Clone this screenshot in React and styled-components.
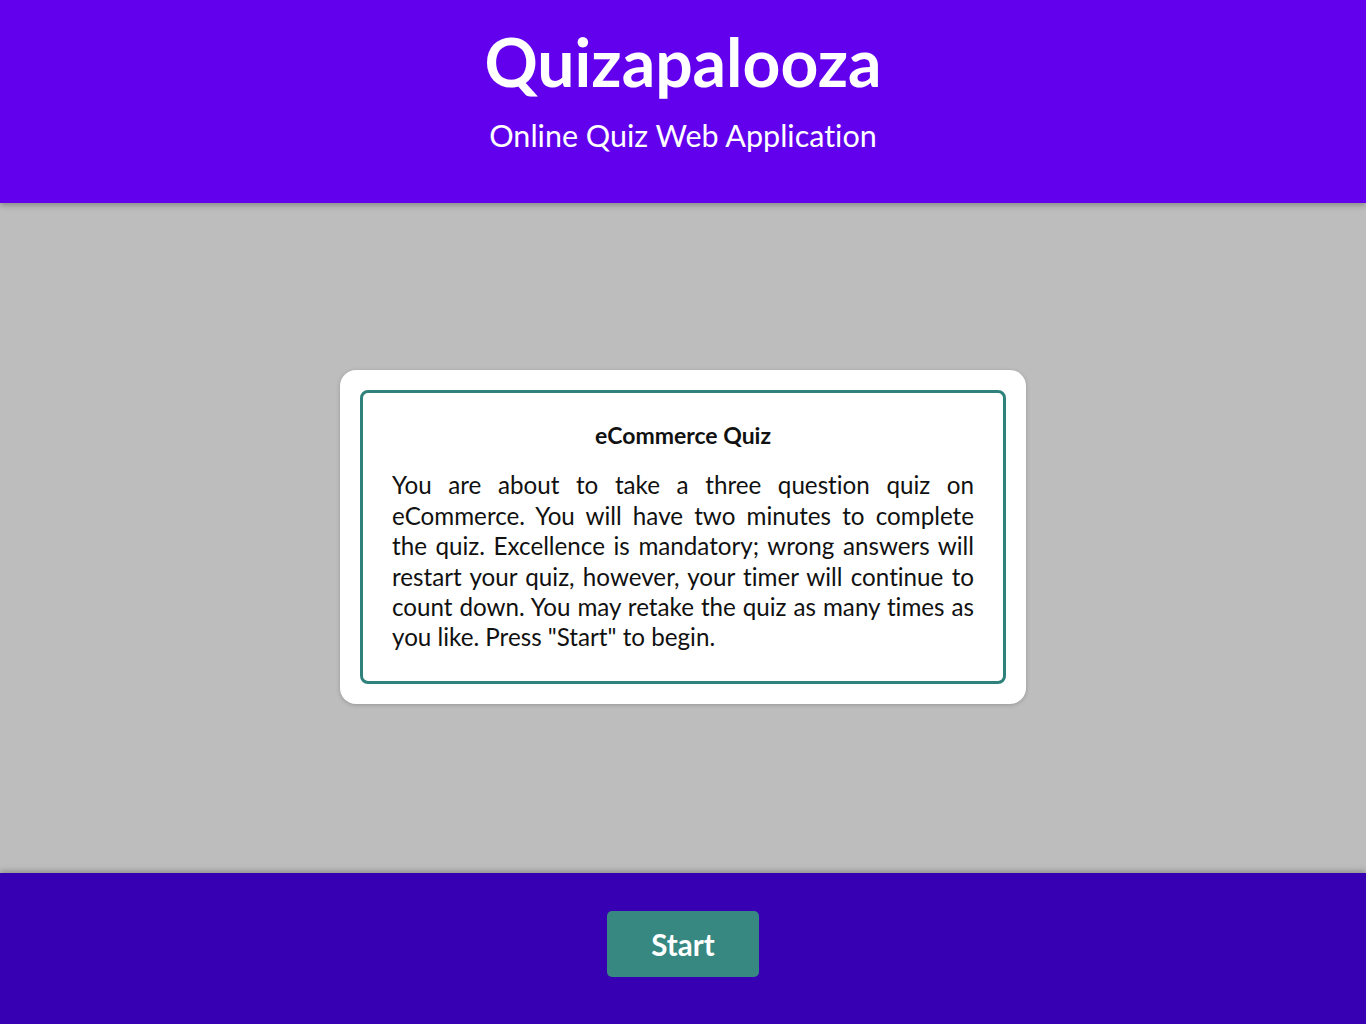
import React from 'react';
import styled, { createGlobalStyle } from 'styled-components';

const GlobalStyle = createGlobalStyle`
  html, body {
    margin: 0;
    padding: 0;
    height: 100%;
  }
  body {
    font-family: Lato, "Open Sans", sans-serif;
    font-variant-ligatures: none;
    background: #bdbdbd;
  }
  #root {
    height: 100%;
  }
`;

const Page = styled.div`
  height: 1024px;
  display: flex;
  flex-direction: column;
`;

const Header = styled.header`
  height: 203px;
  background: #6200ee;
  color: #fff;
  display: flex;
  flex-direction: column;
  align-items: center;
  box-shadow: 0 2px 6px rgba(0, 0, 0, 0.3);
  position: relative;
  z-index: 1;
`;

const Title = styled.h1`
  margin: 26px 0 0;
  font-size: 66px;
  font-weight: 700;
  line-height: 72px;
`;

const Subtitle = styled.h2`
  margin: 19px 0 0;
  font-size: 30.5px;
  font-weight: 400;
  line-height: 36px;
`;

const Main = styled.main`
  flex: 1;
  display: flex;
  align-items: center;
  justify-content: center;
  background: #bdbdbd;
  padding-bottom: 2px;
`;

const Card = styled.div`
  width: 646px;
  background: #fff;
  border-radius: 16px;
  padding: 20px;
  box-shadow: 0 1px 4px rgba(0, 0, 0, 0.2);
`;

const Panel = styled.div`
  border: 3px solid #2f817b;
  border-radius: 8px;
  padding: 29px 29px 28px;
`;

const QuizTitle = styled.h3`
  margin: 0 0 22px;
  text-align: center;
  font-size: 23px;
  font-weight: 700;
  color: #111;
  line-height: 26px;
`;

const Description = styled.p`
  margin: 0;
  font-size: 24.2px;
  line-height: 30.4px;
  text-align: justify;
  color: #111;
`;

const Footer = styled.footer`
  height: 151px;
  background: #3700b3;
  display: flex;
  justify-content: center;
  padding-top: 38px;
  box-sizing: border-box;
  box-shadow: 0 -2px 6px rgba(0, 0, 0, 0.25);
  position: relative;
`;

const StartButton = styled.button`
  width: 152px;
  height: 66px;
  background: #388882;
  color: #fff;
  border: none;
  border-radius: 5px;
  font-family: Lato, "Open Sans", sans-serif;
  font-size: 29.5px;
  font-weight: 700;
  cursor: pointer;
`;

const App = () => (
  <>
    <GlobalStyle />
    <Page>
      <Header>
        <Title>Quizapalooza</Title>
        <Subtitle>Online Quiz Web Application</Subtitle>
      </Header>
      <Main>
        <Card>
          <Panel>
            <QuizTitle>eCommerce Quiz</QuizTitle>
            <Description>
              You are about to take a three question quiz on eCommerce. You will have two minutes to
              complete the quiz. Excellence is mandatory; wrong answers will restart your quiz,
              however, your timer will continue to count down. You may retake the quiz as many times
              as you like. Press "Start" to begin.
            </Description>
          </Panel>
        </Card>
      </Main>
      <Footer>
        <StartButton>Start</StartButton>
      </Footer>
    </Page>
  </>
);

export default App;
